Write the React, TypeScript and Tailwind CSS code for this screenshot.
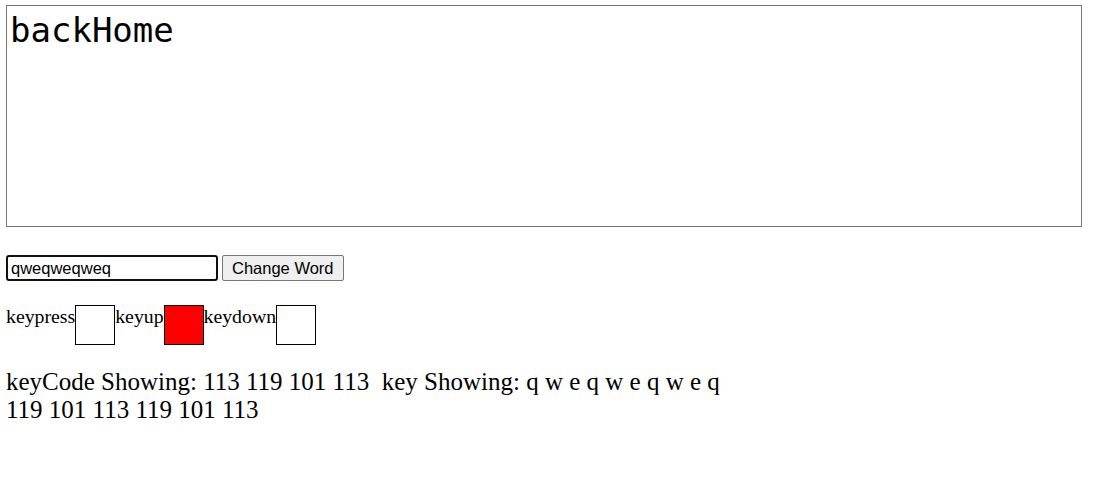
import React, { useState } from "react";

// キー状態表示用の小さい箱
function KeyBox({ label, active }: { label: string; active?: boolean }) {
  return (
    <div className="flex items-start">
      <span className="leading-[23px]">{label}</span>
      <div className={`w-[40px] h-[40px] border border-black ${active ? "bg-[#ff0000]" : "bg-white"}`} />
    </div>
  );
}

export default function App() {
  const [word, setWord] = useState("qweqweqweq");

  return (
    <div className="min-h-[501px] bg-white text-black font-['Liberation_Serif',serif] pl-[6px] pt-[5px]">
      {/* 表示エリア */}
      <div className="w-[1076px] h-[222px] border border-[#767676] px-[3px] pt-[4px] font-['DejaVu_Sans_Mono',monospace] text-[34px] leading-[40px]">
        backHome
      </div>

      {/* 入力とボタン */}
      <div className="flex items-center gap-[4px] mt-[28px] font-['Liberation_Sans',Arial,sans-serif] text-[16.5px]">
        <div className="relative w-[212px] h-[26px] border-2 border-[#101010] rounded-[3px] flex items-center pl-[3px]">
          <input
            value={word}
            onChange={e => setWord(e.target.value)}
            className="w-full outline-none bg-transparent text-black"
          />
        </div>
        <button className="h-[26px] px-[9px] bg-[#efefef] border border-[#767676] rounded-[2px] text-black">
          Change Word
        </button>
      </div>

      {/* キーイベント表示 */}
      <div className="flex mt-[24px] text-[19.8px]">
        <KeyBox label="keypress" />
        <KeyBox label="keyup" active />
        <KeyBox label="keydown" />
      </div>

      {/* キーコード表示 */}
      <div className="mt-[23px] text-[25px] leading-[28px]">
        <div className="whitespace-pre">keyCode Showing: 113 119 101 113  key Showing: q w e q w e q w e q</div>
        <div>119 101 113 119 101 113</div>
      </div>
    </div>
  );
}
